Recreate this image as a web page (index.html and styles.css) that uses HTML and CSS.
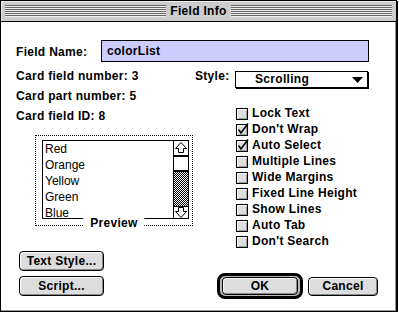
FILE: index.html
```html
<!DOCTYPE html>
<html lang="en">
<head>
  <meta charset="UTF-8" />
  <meta name="viewport" content="width=device-width, initial-scale=1.0"/>
  <title>Field Info</title>
  <link rel="stylesheet" href="styles.css">
</head>
<body>

  <div class="window">
    <div class="titlebar">
      <div class="stripes"></div>
      <span class="title">Field Info</span>
      <div class="stripes"></div>
    </div>

    <div class="content">
      <div class="name-row">
        <span class="name-label">Field Name:</span>
        <div class="name-field">colorList</div>
      </div>

      <div class="main">
        <div class="left">
          <div class="info">Card field number: 3</div>
          <div class="info">Card part number: 5</div>
          <div class="info">Card field ID: 8</div>

          <div class="preview">
            <div class="list">
              <div class="items">
                <div>Red</div>
                <div>Orange</div>
                <div>Yellow</div>
                <div>Green</div>
                <div>Blue</div>
              </div>
              <div class="scrollbar">
                <div class="arrow up">
                  <svg width="14" height="14" viewBox="0 0 14 14"><polygon points="7,1.5 12.5,7.5 9.5,7.5 9.5,11.5 4.5,11.5 4.5,7.5 1.5,7.5" fill="#fff" stroke="#000"/></svg>
                </div>
                <div class="thumb"></div>
                <div class="track"></div>
                <div class="arrow down">
                  <svg width="14" height="11" viewBox="0 0 14 11"><polygon points="7,10.5 12.5,4.5 9.5,4.5 9.5,0.5 4.5,0.5 4.5,4.5 1.5,4.5" fill="#fff" stroke="#000"/></svg>
                </div>
              </div>
            </div>
            <span class="preview-label">Preview</span>
          </div>

          <div class="left-buttons">
            <button class="btn">Text Style...</button>
            <button class="btn">Script...</button>
          </div>
        </div>

        <div class="right">
          <div class="style-row">
            <span class="style-label">Style:</span>
            <div class="popup">
              <span>Scrolling</span>
              <svg class="popup-arrow" width="11" height="6" viewBox="0 0 11 6"><polygon points="0,0 11,0 5.5,6" fill="#000"/></svg>
            </div>
          </div>

          <ul class="checks">
            <li><svg class="box" width="13" height="14" viewBox="0 0 13 14"><rect x="0.5" y="2.5" width="11" height="11" fill="#ddd" stroke="#000"/><path d="M1.5 12.5V3.5H10.5" fill="none" stroke="#fff"/><path d="M2.5 12.5H10.5V4.5" fill="none" stroke="#999"/></svg>Lock Text</li>
            <li><svg class="box" width="13" height="14" viewBox="0 0 13 14"><rect x="0.5" y="2.5" width="11" height="11" fill="#ddd" stroke="#000"/><path d="M1.5 12.5V3.5H10.5" fill="none" stroke="#fff"/><path d="M2.5 12.5H10.5V4.5" fill="none" stroke="#999"/><path d="M2.5 7.5L5 11L12 1.5" fill="none" stroke="#000" stroke-width="1.6"/></svg>Don't Wrap</li>
            <li><svg class="box" width="13" height="14" viewBox="0 0 13 14"><rect x="0.5" y="2.5" width="11" height="11" fill="#ddd" stroke="#000"/><path d="M1.5 12.5V3.5H10.5" fill="none" stroke="#fff"/><path d="M2.5 12.5H10.5V4.5" fill="none" stroke="#999"/><path d="M2.5 7.5L5 11L12 1.5" fill="none" stroke="#000" stroke-width="1.6"/></svg>Auto Select</li>
            <li><svg class="box" width="13" height="14" viewBox="0 0 13 14"><rect x="0.5" y="2.5" width="11" height="11" fill="#ddd" stroke="#000"/><path d="M1.5 12.5V3.5H10.5" fill="none" stroke="#fff"/><path d="M2.5 12.5H10.5V4.5" fill="none" stroke="#999"/></svg>Multiple Lines</li>
            <li><svg class="box" width="13" height="14" viewBox="0 0 13 14"><rect x="0.5" y="2.5" width="11" height="11" fill="#ddd" stroke="#000"/><path d="M1.5 12.5V3.5H10.5" fill="none" stroke="#fff"/><path d="M2.5 12.5H10.5V4.5" fill="none" stroke="#999"/></svg>Wide Margins</li>
            <li><svg class="box" width="13" height="14" viewBox="0 0 13 14"><rect x="0.5" y="2.5" width="11" height="11" fill="#ddd" stroke="#000"/><path d="M1.5 12.5V3.5H10.5" fill="none" stroke="#fff"/><path d="M2.5 12.5H10.5V4.5" fill="none" stroke="#999"/></svg>Fixed Line Height</li>
            <li><svg class="box" width="13" height="14" viewBox="0 0 13 14"><rect x="0.5" y="2.5" width="11" height="11" fill="#ddd" stroke="#000"/><path d="M1.5 12.5V3.5H10.5" fill="none" stroke="#fff"/><path d="M2.5 12.5H10.5V4.5" fill="none" stroke="#999"/></svg>Show Lines</li>
            <li><svg class="box" width="13" height="14" viewBox="0 0 13 14"><rect x="0.5" y="2.5" width="11" height="11" fill="#ddd" stroke="#000"/><path d="M1.5 12.5V3.5H10.5" fill="none" stroke="#fff"/><path d="M2.5 12.5H10.5V4.5" fill="none" stroke="#999"/></svg>Auto Tab</li>
            <li><svg class="box" width="13" height="14" viewBox="0 0 13 14"><rect x="0.5" y="2.5" width="11" height="11" fill="#ddd" stroke="#000"/><path d="M1.5 12.5V3.5H10.5" fill="none" stroke="#fff"/><path d="M2.5 12.5H10.5V4.5" fill="none" stroke="#999"/></svg>Don't Search</li>
          </ul>

          <div class="dialog-buttons">
            <div class="default-ring">
              <button class="btn ok">OK</button>
            </div>
            <button class="btn cancel">Cancel</button>
          </div>
        </div>
      </div>
    </div>
  </div>

</body>
</html>
```

FILE: styles.css
```css
* {
  box-sizing: border-box;
}

body {
  margin: 0;
  background-color: #fff;
  color: #000;
  font-family: "Liberation Sans", Arial, sans-serif;
  font-size: 12px;
  font-weight: bold;
  letter-spacing: 0.3px;
}

.window {
  width: 397px;
  height: 312px;
  border: 1px solid #000;
  background-color: #fff;
  box-shadow: 1px 1px 0 #000, inset -1px -1px 0 #999;
}

/* title bar */

.titlebar {
  display: flex;
  align-items: center;
  height: 21px;
  padding: 0 4px;
  background-color: #ccc;
  border-bottom: 1px solid #000;
  box-shadow: inset 1px 1px 0 #eee;
}

.stripes {
  flex: 1;
  height: 12px;
  background-image: repeating-linear-gradient(to bottom, #666 0 1px, #eee 1px 2px);
}

.title {
  padding: 0 4px;
  line-height: 16px;
}

/* content */

.content {
  padding-left: 15px;
}

.name-row {
  display: flex;
  align-items: center;
  margin-top: 18px;
}

.name-label {
  width: 85px;
  padding-top: 2px;
}

.name-field {
  width: 268px;
  height: 22px;
  padding-left: 5px;
  line-height: 20px;
  background-color: #ccf;
  border: 1px solid #000;
}

.main {
  display: flex;
}

.left {
  width: 179px;
  padding-top: 4px;
}

.info {
  line-height: 20px;
}

.preview {
  position: relative;
  width: 158px;
  height: 91px;
  margin: 9px 0 0 19px;
  padding: 4px 0 0 6px;
  border: 1px dotted #000;
}

.list {
  display: flex;
  width: 147px;
  height: 79px;
  border: 1px solid #000;
  font-weight: normal;
  letter-spacing: 0;
}

.items {
  flex: 1;
  padding-left: 2px;
  line-height: 16px;
  overflow: hidden;
}

.scrollbar {
  display: flex;
  flex-direction: column;
  width: 15px;
  border-left: 1px solid #000;
}

.arrow {
  display: flex;
  justify-content: center;
}

.arrow.up {
  height: 15px;
  border-bottom: 1px solid #000;
}

.arrow.down {
  height: 12px;
  border-top: 1px solid #000;
}

.thumb {
  height: 16px;
  background-color: #fff;
  border-top: 1px solid #000;
  border-bottom: 2px solid #000;
}

.track {
  flex: 1;
  background-color: #fff;
  background-image: repeating-conic-gradient(#000 0 25%, #fff 0 50%);
  background-size: 2px 2px;
}

.preview-label {
  position: absolute;
  bottom: -6px;
  left: 50%;
  transform: translateX(-50%);
  padding: 0 7px;
  line-height: 16px;
  background-color: #fff;
}

.left-buttons {
  display: flex;
  flex-direction: column;
  gap: 5px;
  margin: 25px 0 0 3px;
}

/* buttons */

.btn {
  height: 20px;
  padding: 0 0 1px;
  font: inherit;
  letter-spacing: inherit;
  color: #000;
  background-color: #ddd;
  border: 1px solid #000;
  border-radius: 4px;
  box-shadow: inset 1px 1px 0 #fff, inset -1px -1px 0 #888;
}

.left-buttons .btn {
  width: 85px;
}

/* right column */

.right {
  flex: 1;
}

.style-row {
  display: flex;
  margin-top: 6px;
}

.style-label {
  width: 40px;
  line-height: 16px;
}

.popup {
  display: flex;
  align-items: center;
  width: 133px;
  height: 17px;
  margin-top: 3px;
  padding-left: 19px;
  line-height: 15px;
  border: 1px solid #000;
  box-shadow: 1px 1px 0 #000;
}

.popup-arrow {
  margin: 0 4px 0 auto;
}

.checks {
  list-style: none;
  margin: 17px 0 0 41px;
  padding: 0;
}

.checks li {
  display: flex;
  align-items: center;
  gap: 3px;
  height: 16px;
  line-height: 16px;
}

.dialog-buttons {
  display: flex;
  align-items: center;
  gap: 5px;
  margin: 24px 0 0 22px;
}

.default-ring {
  display: flex;
  padding: 1px 2px;
  background-color: #bbb;
  border: 3px solid #000;
  border-radius: 8px;
}

.btn.ok {
  width: 76px;
  height: 18px;
}

.btn.cancel {
  width: 70px;
  height: 19px;
}
```
